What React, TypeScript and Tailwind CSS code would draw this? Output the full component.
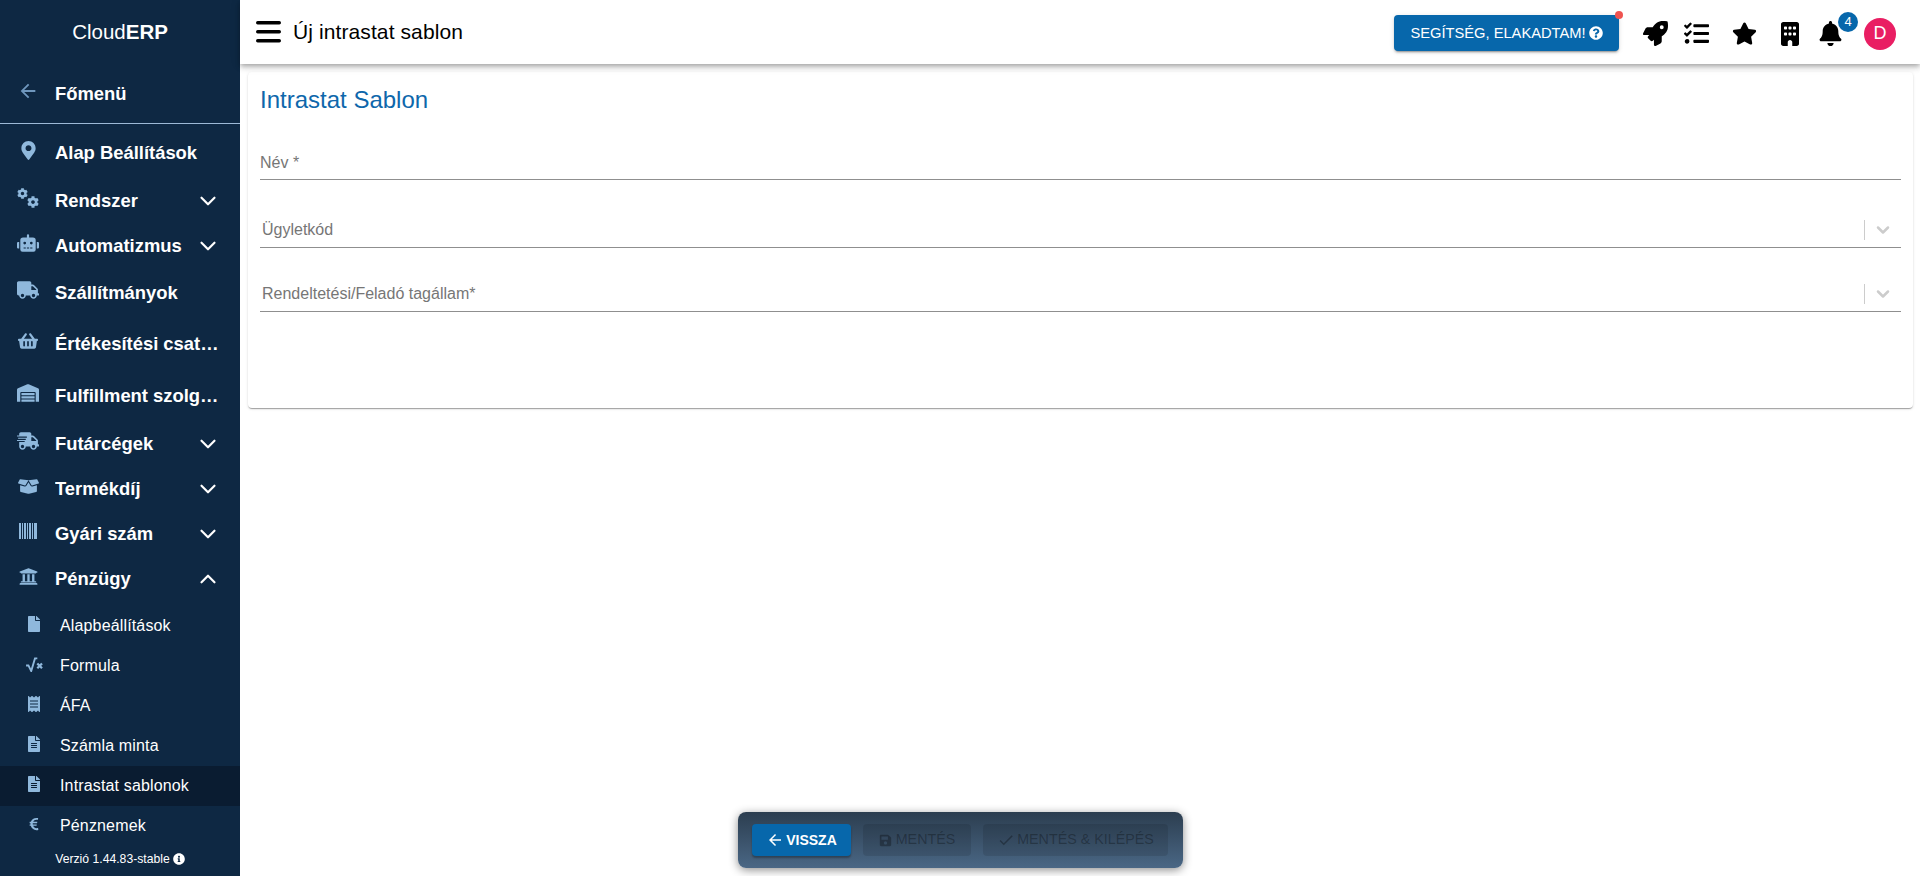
import type { ReactNode } from "react";
import {
  FaBell,
  FaBoxOpen,
  FaCog,
  FaEuroSign,
  FaFile,
  FaFileAlt,
  FaInfoCircle,
  FaMapMarkerAlt,
  FaQuestionCircle,
  FaReceipt,
  FaRobot,
  FaRocket,
  FaSave,
  FaShippingFast,
  FaShoppingBasket,
  FaStar,
  FaTasks,
  FaTruck,
  FaUniversity,
  FaWarehouse,
} from "react-icons/fa";
import { FaBuilding } from "react-icons/fa6";
import { MdArrowBack, MdCheck } from "react-icons/md";
import { ChevronDown, ChevronUp } from "lucide-react";

const FONT = "font-['Liberation_Sans',Arial,sans-serif]";

function SqrtIcon() {
  return (
    <svg viewBox="0 0 20 16" className="h-[15px] w-[19px]" fill="none" stroke="currentColor">
      <path d="M1 9h2.5l3 6L10.5 1.5H13" strokeWidth="2" />
      <path d="M13 7l5 5M18 7l-5 5" strokeWidth="2.4" />
    </svg>
  );
}

function GearsIcon() {
  return (
    <span className="relative block h-[20px] w-[22px]">
      <FaCog size={11} className="absolute left-0 top-0" />
      <FaCog size={12} className="absolute bottom-0 right-0" />
    </span>
  );
}

function BarcodeIcon() {
  return (
    <svg viewBox="0 0 18 16" className="h-[16px] w-[18px]" fill="currentColor">
      <rect x="0" width="2" height="16" />
      <rect x="3" width="1" height="16" />
      <rect x="5" width="2" height="16" />
      <rect x="8" width="1" height="16" />
      <rect x="10" width="2" height="16" />
      <rect x="13" width="1" height="16" />
      <rect x="15" width="3" height="16" />
    </svg>
  );
}

function MainRow({
  icon,
  label,
  h,
  arrow,
  pt,
}: {
  icon: ReactNode;
  label: string;
  h: string;
  arrow?: "down" | "up";
  pt?: string;
}) {
  return (
    <div className={`flex items-center pl-[17px] pr-[19px] ${h} ${pt ?? ""}`}>
      <span className="flex w-[22px] shrink-0 -translate-y-[3px] justify-center text-[#8fb8dc]">{icon}</span>
      <span className="ml-[16px] min-w-0 flex-1 truncate text-[18.4px] font-bold text-white">{label}</span>
      {arrow === "down" && <ChevronDown className="h-[26px] w-[26px] shrink-0 text-white" strokeWidth={2} />}
      {arrow === "up" && <ChevronUp className="h-[26px] w-[26px] shrink-0 text-white" strokeWidth={2} />}
    </div>
  );
}

function SubRow({ icon, label, active }: { icon: ReactNode; label: string; active?: boolean }) {
  return (
    <div className={`flex h-[40px] items-center pl-[24px] ${active ? "bg-[#0a1c31]" : ""}`}>
      <span className="flex w-[20px] shrink-0 -translate-y-[2px] justify-center text-[#8fb8dc]">{icon}</span>
      <span className="ml-[16px] text-[16px] tracking-[0.15px] text-white">{label}</span>
    </div>
  );
}

function Sidebar() {
  return (
    <aside className="flex h-[876px] w-[240px] shrink-0 flex-col bg-[#0e2843]">
      <div className="flex h-[64px] items-center justify-center text-[20.5px] text-white">
        Cloud<b>ERP</b>
      </div>
      <div className="flex h-[60px] items-center border-b border-[#9db9d6] pl-[17px]">
        <span className="flex w-[22px] -translate-y-[3px] justify-center text-[#6f97bd]">
          <MdArrowBack size={24} />
        </span>
        <span className="ml-[16px] text-[18.4px] font-bold text-white">Főmenü</span>
      </div>
      <MainRow icon={<FaMapMarkerAlt size={19} />} label="Alap Beállítások" h="h-[54px]" pt="pt-[4px]" />
      <MainRow icon={<GearsIcon />} label="Rendszer" h="h-[46px]" arrow="down" />
      <MainRow icon={<FaRobot size={22} />} label="Automatizmus" h="h-[44px]" arrow="down" />
      <MainRow icon={<FaTruck size={22} />} label="Szállítmányok" h="h-[50px]" />
      <MainRow icon={<FaShoppingBasket size={20} />} label="Értékesítési csatornák" h="h-[52px]" />
      <MainRow icon={<FaWarehouse size={22} />} label="Fulfillment szolgáltatók" h="h-[52px]" />
      <MainRow icon={<FaShippingFast size={22} />} label="Futárcégek" h="h-[44px]" arrow="down" />
      <MainRow icon={<FaBoxOpen size={21} />} label="Termékdíj" h="h-[46px]" arrow="down" />
      <MainRow icon={<BarcodeIcon />} label="Gyári szám" h="h-[44px]" arrow="down" />
      <MainRow icon={<FaUniversity size={19} />} label="Pénzügy" h="h-[46px]" arrow="up" />
      <div className="flex flex-col pt-[4px]">
        <SubRow icon={<FaFile size={16} />} label="Alapbeállítások" />
        <SubRow icon={<SqrtIcon />} label="Formula" />
        <SubRow icon={<FaReceipt size={16} />} label="ÁFA" />
        <SubRow icon={<FaFileAlt size={16} />} label="Számla minta" />
        <SubRow icon={<FaFileAlt size={16} />} label="Intrastat sablonok" active />
        <SubRow icon={<FaEuroSign size={14} />} label="Pénznemek" />
      </div>
      <div className="flex h-[26px] items-center justify-center gap-[3px] text-[12.2px] text-white">
        Verzió 1.44.83-stable <FaInfoCircle size={12} />
      </div>
    </aside>
  );
}

function Header() {
  return (
    <header className="relative z-10 flex h-[64px] shrink-0 items-center bg-white pl-[16px] pr-[24px] shadow-[0_2px_4px_-1px_rgba(0,0,0,0.2),0_4px_5px_0_rgba(0,0,0,0.14),0_1px_10px_0_rgba(0,0,0,0.12)]">
      <svg viewBox="0 0 25 22" className="h-[22px] w-[25px] text-black" fill="currentColor">
        <rect x="0" y="0" width="25" height="3.4" rx="1.7" />
        <rect x="0" y="9" width="25" height="3.4" rx="1.7" />
        <rect x="0" y="18" width="25" height="3.4" rx="1.7" />
      </svg>
      <h1 className="ml-[12px] text-[21px] font-normal tracking-[0.1px] text-black">Új intrastat sablon</h1>
      <div className="relative ml-auto mt-[2px] flex h-[36px] w-[225px] items-center justify-center gap-[3px] rounded-[4px] bg-[#0767ab] text-[14.7px] text-white shadow-[0_3px_1px_-2px_rgba(0,0,0,0.2),0_2px_2px_0_rgba(0,0,0,0.14),0_1px_5px_0_rgba(0,0,0,0.12)]">
        SEGÍTSÉG, ELAKADTAM! <FaQuestionCircle size={14} />
        <span className="absolute -right-[4px] -top-[4px] h-[8px] w-[8px] rounded-full bg-[#ef5350]" />
      </div>
      <div className="ml-[24px] mt-[3px] flex items-center text-black">
        <FaRocket size={25} />
        <FaTasks size={25} className="ml-[16px]" />
        <FaStar size={25} className="ml-[23px]" />
        <FaBuilding size={24} className="ml-[21px]" />
        <div className="relative ml-[16px]">
          <FaBell size={25} />
          <span className="absolute -right-[15px] -top-[9px] flex h-[20px] w-[20px] items-center justify-center rounded-full bg-[#0767ab] text-[13px] text-white">
            4
          </span>
        </div>
        <span className="ml-[21px] flex h-[32px] w-[32px] items-center justify-center rounded-full bg-[#e91e63] text-[18px] text-white">
          D
        </span>
      </div>
    </header>
  );
}

function SelectField({ label, h }: { label: string; h: string }) {
  return (
    <div className={`flex items-end border-b border-[#8f8f8f] pb-[7px] pl-[2px] ${h}`}>
      <span className="flex-1 text-[16px] leading-[20px] text-[#767676]">{label}</span>
      <span className="h-[20px] w-px bg-[#cccccc]" />
      <ChevronDown className="mx-[8px] h-[20px] w-[20px] text-[#cccccc]" strokeWidth={3} />
    </div>
  );
}

function Form() {
  return (
    <section className="ml-[8px] mr-[7px] mt-[8px] h-[336px] rounded-[4px] bg-white px-[12px] shadow-[0_2px_1px_-1px_rgba(0,0,0,0.2),0_1px_1px_0_rgba(0,0,0,0.14),0_1px_3px_0_rgba(0,0,0,0.12)]">
      <h2 className="pt-[14px] text-[24px] font-normal leading-[28px] text-[#0e67ab]">Intrastat Sablon</h2>
      <div className="mt-[24px] flex h-[42px] items-end border-b border-[#8f8f8f] pb-[6px]">
        <span className="text-[16px] leading-[20px] text-[#767676]">Név *</span>
      </div>
      <SelectField label="Ügyletkód" h="h-[68px]" />
      <SelectField label="Rendeltetési/Feladó tagállam*" h="h-[64px]" />
    </section>
  );
}

function ActionBar() {
  return (
    <div className="absolute bottom-[8px] left-[738px] flex h-[56px] w-[445px] items-center gap-[12px] rounded-[8px] bg-gradient-to-b from-[#2c3e50] to-[#4a6785] pl-[14px] shadow-[0_2px_10px_rgba(0,0,0,0.45)]">
      <div className="flex h-[32px] w-[99px] items-center justify-center gap-[2px] rounded-[4px] bg-[#0767ab] text-[14px] font-bold text-white shadow-[0_2px_2px_rgba(0,0,0,0.3)]">
        <MdArrowBack size={18} /> VISSZA
      </div>
      <div className="flex h-[32px] w-[108px] items-center justify-center gap-[4px] rounded-[4px] bg-black/10 text-[14.3px] text-black/30">
        <FaSave size={13} /> MENTÉS
      </div>
      <div className="flex h-[32px] w-[185px] items-center justify-center gap-[2px] rounded-[4px] bg-black/10 text-[14.3px] text-black/30">
        <MdCheck size={18} /> MENTÉS &amp; KILÉPÉS
      </div>
    </div>
  );
}

export default function App() {
  return (
    <div className={`relative flex h-[876px] w-[1920px] overflow-hidden bg-white ${FONT}`}>
      <Sidebar />
      <main className="flex min-w-0 flex-1 flex-col">
        <Header />
        <Form />
      </main>
      <ActionBar />
    </div>
  );
}
